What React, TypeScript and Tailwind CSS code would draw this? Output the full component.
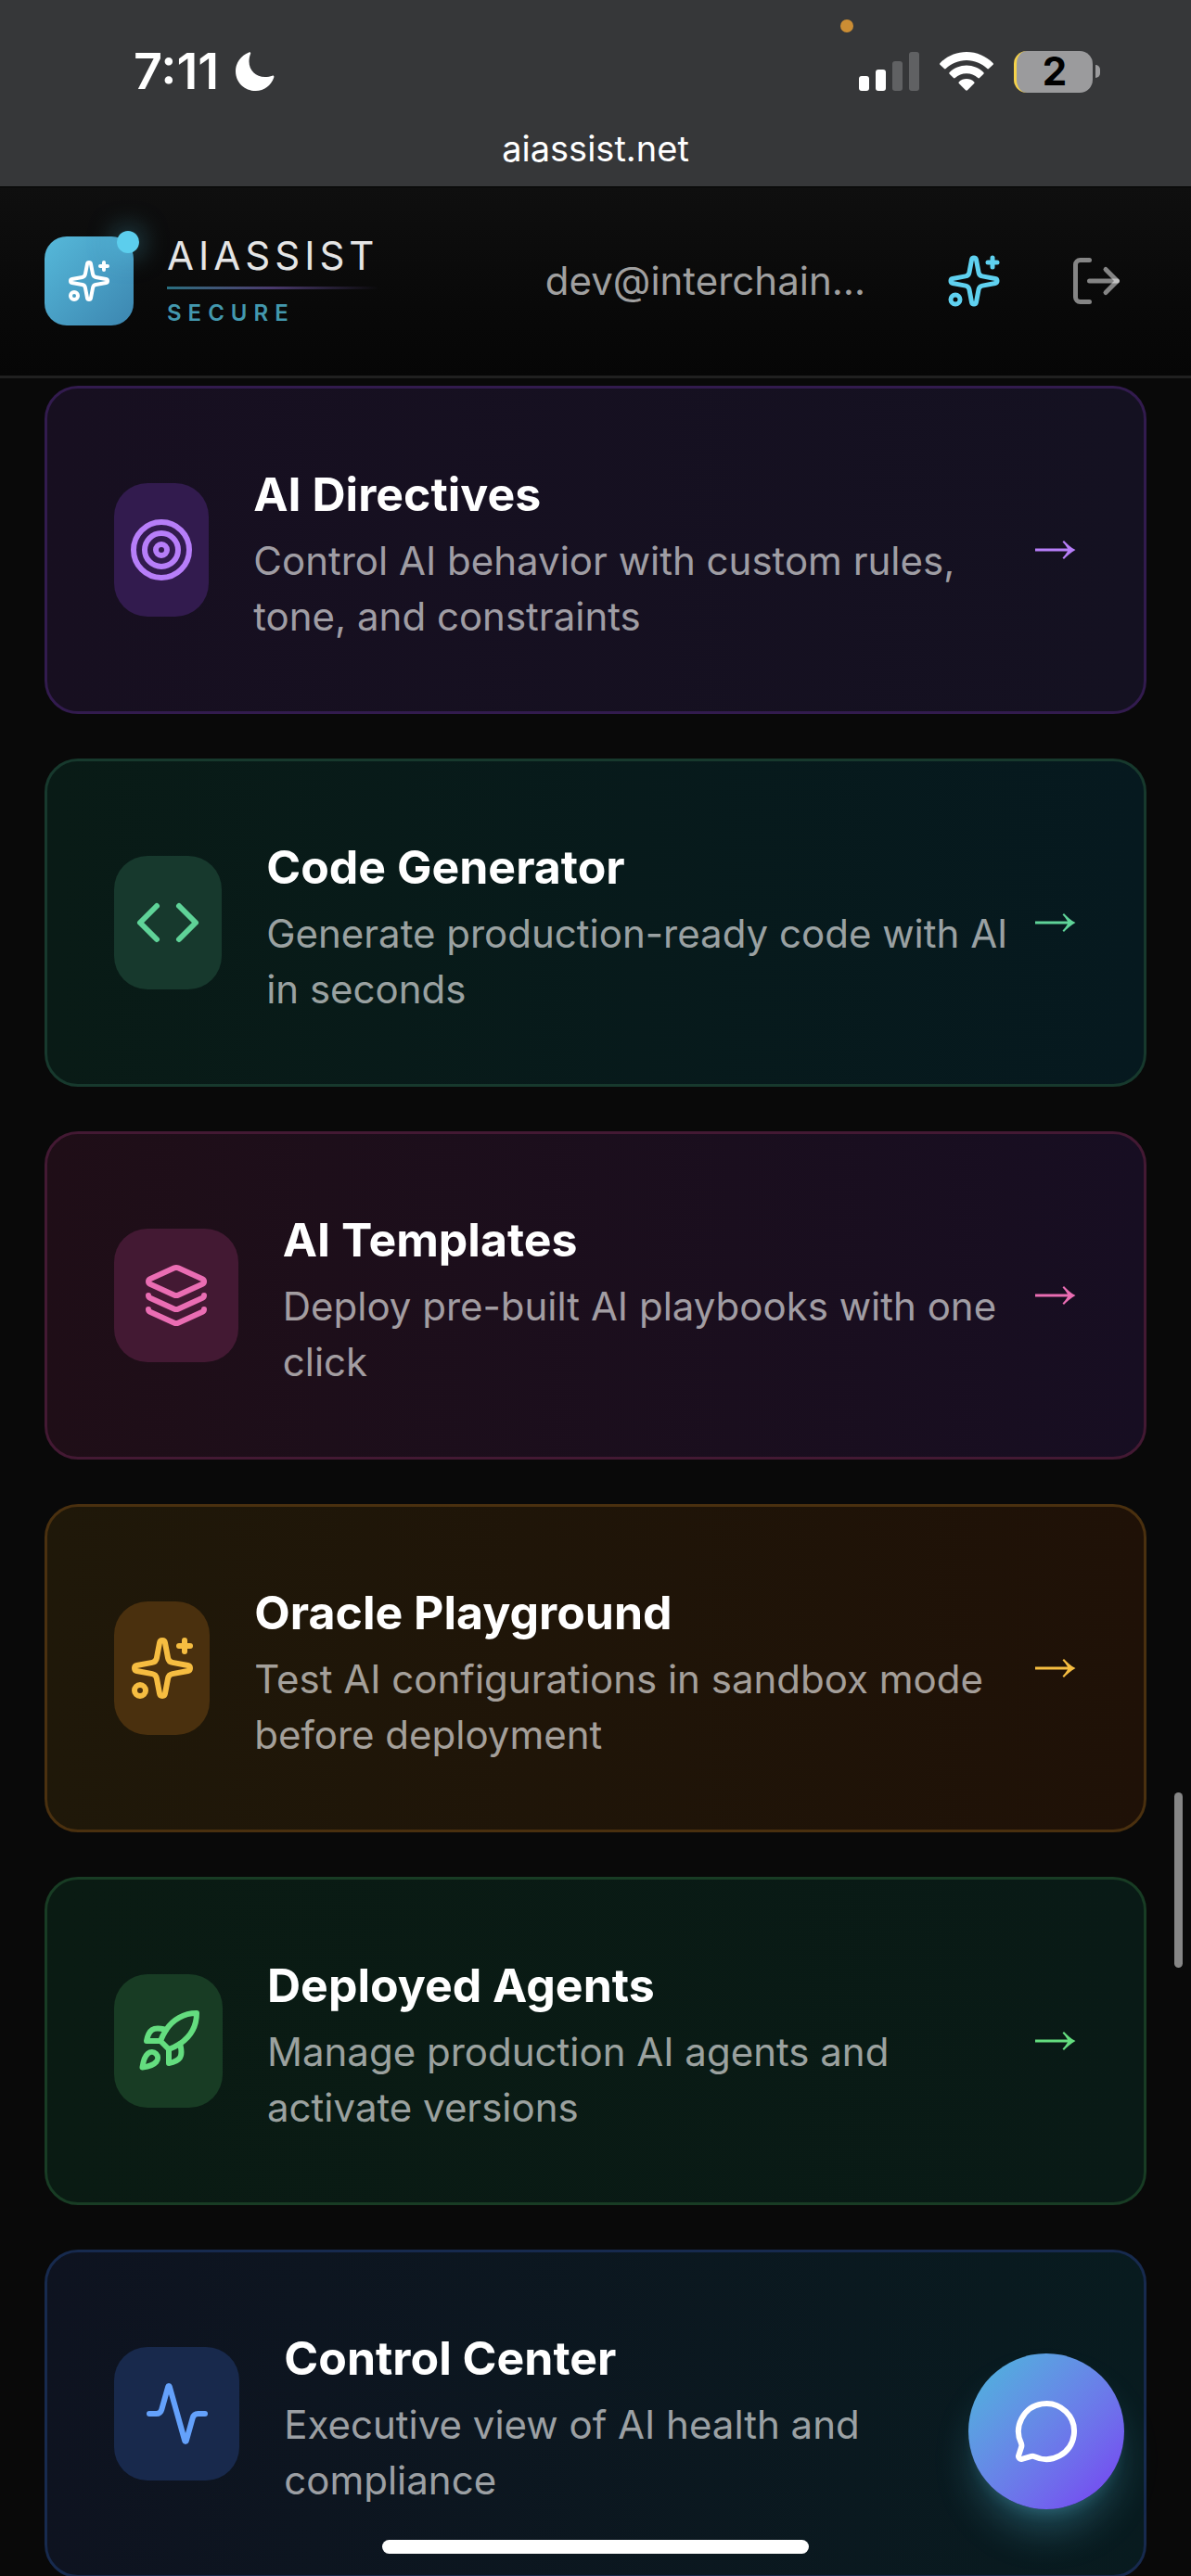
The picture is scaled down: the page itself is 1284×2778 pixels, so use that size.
import {
  Activity,
  Code,
  Layers,
  LogOut,
  MessageCircle,
  Rocket,
  Sparkles,
  Target,
  type LucideIcon,
} from "lucide-react";

interface Tool {
  title: string;
  description: string;
  href: string;
  icon: LucideIcon;
  card: string;
  iconBox: string;
  accent: string;
}

const TOOLS: Tool[] = [
  {
    title: "AI Directives",
    description: "Control AI behavior with custom rules, tone, and constraints",
    href: "#directives",
    icon: Target,
    card: "border-[#321b4e] from-[#170f20] to-[#141121]",
    iconBox: "bg-[#321b4e]",
    accent: "text-[#b77ef9]",
  },
  {
    title: "Code Generator",
    description: "Generate production-ready code with AI in seconds",
    href: "#code-generator",
    icon: Code,
    card: "border-[#17392d] from-[#091b16] to-[#06191f]",
    iconBox: "bg-[#17392d]",
    accent: "text-[#5fd398]",
  },
  {
    title: "AI Templates",
    description: "Deploy pre-built AI playbooks with one click",
    href: "#templates",
    icon: Layers,
    card: "border-[#431933] from-[#1f0e17] to-[#170e22]",
    iconBox: "bg-[#431933]",
    accent: "text-[#ea6db3]",
  },
  {
    title: "Oracle Playground",
    description: "Test AI configurations in sandbox mode before deployment",
    href: "#playground",
    icon: Sparkles,
    card: "border-[#4a300f] from-[#1f1809] to-[#1f1107]",
    iconBox: "bg-[#4a300e]",
    accent: "text-[#f6bd41]",
  },
  {
    title: "Deployed Agents",
    description: "Manage production AI agents and activate versions",
    href: "#agents",
    icon: Rocket,
    card: "border-[#183c24] from-[#0a1b13] to-[#091a16]",
    iconBox: "bg-[#183c24]",
    accent: "text-[#64dd7f]",
  },
  {
    title: "Control Center",
    description: "Executive view of AI health and compliance",
    href: "#control-center",
    icon: Activity,
    card: "border-[#172a4e] from-[#0e1320] to-[#081b1f]",
    iconBox: "bg-[#18294c]",
    accent: "text-[#64a1fb]",
  },
];

function SignalIcon() {
  return (
    <svg width="65" height="42" viewBox="0 0 65 42" fill="#fff" aria-label="Signal">
      <rect x="0" y="26" width="11" height="16" rx="3" />
      <rect x="18" y="19" width="11" height="23" rx="3" />
      <rect x="36" y="10" width="11" height="32" rx="3" fill="#606163" />
      <rect x="54" y="0" width="11" height="42" rx="3" fill="#606163" />
    </svg>
  );
}

function WifiIcon() {
  return (
    <svg width="58" height="42" viewBox="0 0 58 42" fill="#fff" aria-label="Wi-Fi">
      <path d="M29 0C40 0 50 4.500 57.500 12c.6.600.6 1.200.1 1.800L53 18c-.6.600-1.200.5-1.700 0C45.500 12.500 37.500 9 29 9S12.500 12.500 6.700 18c-.5.500-1.100.6-1.700 0L.4 13.800C-.1 13.200-.1 12.600.5 12 8 4.500 18 0 29 0Z" />
      <path d="M29 14.500c7 0 13.500 2.800 18.300 7.400.6.600.6 1.200.1 1.800L43 28c-.5.500-1.100.5-1.700 0C38 25 33.700 23.200 29 23.200S20 25 16.700 28c-.6.500-1.200.5-1.700 0l-4.400-4.300c-.5-.6-.5-1.200.1-1.800 4.800-4.600 11.300-7.400 18.300-7.400Z" />
      <path d="M29 29c3.200 0 6 1.200 8.100 3.200.6.600.6 1.200.1 1.800L30 41.300c-.6.600-1.400.6-2 0L20.800 34c-.5-.6-.5-1.200.1-1.800C23 30.200 25.800 29 29 29Z" />
    </svg>
  );
}

function MoonIcon() {
  return (
    <svg width="42" height="42" viewBox="0 0 42 42" fill="#fff" aria-label="Do not disturb">
      <path d="M14.400.4c1-.5 2.200.4 1.700 1.600-1.100 2.700-1.600 5.500-1.600 8.200 0 9.700 7.200 16.900 17.300 16.900 2.800 0 5.400-.5 7.700-1.400 1.200-.4 2.300.5 1.800 1.700C38.200 36.200 30.700 42 21.700 42 9.500 42 0 32.700 0 20.700 0 11.600 5.800 3.800 14.400.4Z" />
    </svg>
  );
}

function ArrowIcon({ className }: { className: string }) {
  return (
    <svg width="46" height="20" viewBox="0 0 46 20" className={`shrink-0 ${className}`} aria-hidden="true">
      <path
        fill="currentColor"
        d="M1 8.500H36C34.500 6 32.500 3.500 30.500 1.500L32 0C35.500 3.500 39.500 7.500 44.500 10C39.500 12.500 35.500 16.500 32 20L30.500 18.500C32.500 16.500 34.500 14 36 11.500H1Z"
      />
    </svg>
  );
}

function StatusBar() {
  return (
    <div className="shrink-0 border-b border-black bg-[#363739] pb-[15px] pt-5 text-white">
      <div className="flex h-[114px] items-center justify-between pl-36 pr-[98px]">
        <div className="flex items-center gap-[18px]">
          <span className="text-[54px] font-semibold leading-none">7:11</span>
          <MoonIcon />
        </div>
        <div className="relative flex items-center gap-[22px]">
          <span className="absolute -left-5 -top-[34px] size-3.5 rounded-full bg-[#cb8d34]" />
          <SignalIcon />
          <WifiIcon />
          <div className="flex items-center gap-[3px]">
            <span className="flex h-[45px] w-[85px] items-center justify-center rounded-[14px] border-l-[3px] border-[#f5d24a] bg-[#9b9b9d] text-[42px] font-bold leading-none text-black">
              2
            </span>
            <span className="h-3.5 w-[5px] rounded-r-full bg-[#9b9b9d]" />
          </div>
        </div>
      </div>
      <p className="text-center text-[38px] leading-[52px]">aiassist.net</p>
    </div>
  );
}

function AppHeader() {
  return (
    <header className="flex shrink-0 items-center justify-between border-b-[3px] border-[#202020] bg-linear-to-b from-[#0f0f0f] to-[#060606] pb-[54px] pl-12 pr-[72px] pt-[53px]">
      <div className="flex items-center gap-9">
        <div className="relative flex size-24 items-center justify-center rounded-3xl bg-linear-to-br from-[#56b9da] to-[#3c86b0] text-white">
          <Sparkles size={48} />
          <span className="absolute -right-1.5 -top-1.5 size-6 rounded-full bg-[#5cceed] shadow-[0_0_30px_rgba(92,206,237,0.6)]" />
        </div>
        <div className="flex flex-col">
          <span className="text-[42px] leading-[42px] tracking-[5px] text-[#e5e5e5]">AIASSIST</span>
          <span className="my-3 h-[3px] bg-linear-to-r from-[#286f80] via-[#49396c] to-transparent" />
          <span className="text-2xl font-semibold leading-[27px] tracking-[7px] text-[#4398ae]">SECURE</span>
        </div>
      </div>
      <div className="flex items-center">
        <span className="text-[42px] leading-[60px] text-[#a0a0a0]">dev@interchain…</span>
        <button type="button" aria-label="Assistant" className="ml-[87px] text-[#5fd1f0]">
          <Sparkles size={60} />
        </button>
        <button type="button" aria-label="Sign out" className="ml-[72px] text-white/50">
          <LogOut size={60} />
        </button>
      </div>
    </header>
  );
}

function ToolCard({ tool }: { tool: Tool }) {
  const Icon = tool.icon;

  return (
    <a
      href={tool.href}
      className={`flex items-center rounded-[36px] border-[3px] bg-linear-to-r p-[72px] ${tool.card}`}
    >
      <div className="flex min-w-0 flex-1 items-center gap-12">
        <div className={`flex h-36 w-36 items-center justify-center rounded-[36px] ${tool.iconBox} ${tool.accent}`}>
          <Icon size={72} className="shrink-0" />
        </div>
        <div>
          <h3 className="text-[50px] font-bold leading-[84px] text-white">{tool.title}</h3>
          <p className="text-[42px] leading-[60px] text-white/60">{tool.description}</p>
        </div>
      </div>
      <ArrowIcon className={tool.accent} />
    </a>
  );
}

export default function App() {
  return (
    <div className="relative flex h-screen flex-col overflow-hidden bg-[#090909] font-[Inter,sans-serif]">
      <StatusBar />
      <AppHeader />

      <main className="flex min-h-0 flex-1 flex-col gap-12 overflow-y-auto px-12 pt-2 [scrollbar-width:none]">
        {TOOLS.map((tool) => (
          <ToolCard key={tool.title} tool={tool} />
        ))}
      </main>

      {/* scroll thumb */}
      <span className="absolute right-[9px] top-[1933px] h-[189px] w-[9px] rounded-full bg-[#868686]" />

      <button
        type="button"
        aria-label="Open chat"
        className="absolute bottom-[72px] right-[72px] flex size-[168px] items-center justify-center rounded-full bg-linear-to-br from-[#47b8da] to-[#7638f2] text-white shadow-[0_30px_45px_-9px_rgba(92,206,237,0.3),0_12px_18px_-12px_rgba(92,206,237,0.3)]"
      >
        <MessageCircle size={72} />
      </button>

      {/* home indicator */}
      <span className="absolute bottom-6 left-1/2 h-[15px] w-[460px] -translate-x-1/2 rounded-full bg-white" />
    </div>
  );
}
